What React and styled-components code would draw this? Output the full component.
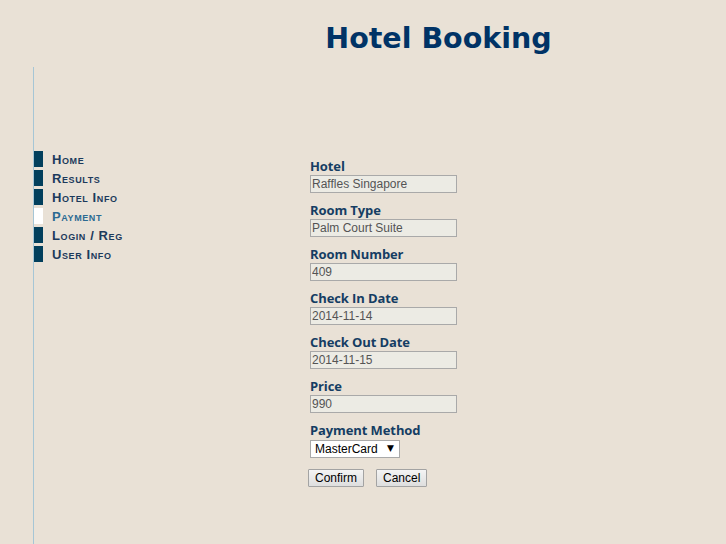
import React, { useState } from 'react';
import styled, { createGlobalStyle } from 'styled-components';

const GlobalStyle = createGlobalStyle`
  html, body {
    margin: 0;
    padding: 0;
    background: #e9e1d6;
    height: 100%;
  }
  #root { min-height: 100%; }
`;

const Page = styled.div`
  min-height: 544px;
  display: flex;
  flex-direction: column;
`;

const Header = styled.header`
  height: 67px;
  padding-left: 151px;
  display: flex;
  justify-content: center;
  align-items: flex-start;
`;

const Title = styled.h1`
  margin: 19px 0 0;
  font-family: "DejaVu Sans", Verdana, sans-serif;
  font-size: 28.5px;
  font-weight: bold;
  color: #003366;
  line-height: 40px;
`;

const Body = styled.div`
  flex: 1;
  display: flex;
`;

const Sidebar = styled.nav`
  margin-left: 33px;
  width: 117px;
  border-left: 1px solid #a6c6d6;
  padding-top: 84px;
  display: flex;
  flex-direction: column;
  gap: 3px;
`;

const NavItem = styled.a`
  display: flex;
  align-items: center;
  height: 16px;
  gap: 9px;
  font-family: "Liberation Sans", Arial, sans-serif;
  font-weight: bold;
  font-size: 13px;
  font-variant: small-caps;
  letter-spacing: 0.6px;
  color: ${p => (p.$active ? '#2b6a92' : '#1c3a5c')};
  text-decoration: none;
  cursor: pointer;
  white-space: nowrap;
`;

const Marker = styled.span`
  width: 9px;
  height: 16px;
  background: ${p => (p.$active ? '#ffffff' : '#023f5c')};
`;

const Main = styled.main`
  flex: 1;
  padding: 91px 0 0 159px;
`;

const Form = styled.form`
  display: flex;
  flex-direction: column;
`;

const Field = styled.div`
  display: flex;
  flex-direction: column;
  margin-bottom: 9px;
`;

const Label = styled.label`
  font-family: "Open Sans", "Lato", sans-serif;
  font-weight: 700;
  font-size: 13px;
  line-height: 17px;
  color: #153d63;
  letter-spacing: -0.1px;
`;

const Input = styled.input`
  box-sizing: border-box;
  width: 147px;
  height: 18px;
  margin: 0;
  padding: 0 0 0 1px;
  border: 1px solid #a9a9a9;
  background: #ecebe4;
  font-family: "Liberation Sans", Arial, sans-serif;
  font-size: 12px;
  color: #545454;
  outline: none;
`;

const SelectWrap = styled.div`
  position: relative;
  width: 90px;
  height: 18px;
`;

const Select = styled.select`
  appearance: none;
  -webkit-appearance: none;
  box-sizing: border-box;
  width: 100%;
  height: 100%;
  margin: 0;
  padding: 0 0 0 4px;
  border: 1px solid #a9a9a9;
  border-radius: 0;
  background: #ffffff;
  font-family: "Liberation Sans", Arial, sans-serif;
  font-size: 12px;
  color: #000;
  outline: none;
`;

const Arrow = styled.span`
  position: absolute;
  right: 6px;
  top: 2px;
  font-family: "DejaVu Sans", sans-serif;
  font-size: 9px;
  line-height: 14px;
  color: #000;
  pointer-events: none;
`;

const Buttons = styled.div`
  display: flex;
  gap: 12px;
  margin: 3px 0 0 -2px;
`;

const Button = styled.button`
  box-sizing: border-box;
  height: 18px;
  padding: 0 6px;
  border: 1px solid #a3a3a3;
  border-radius: 1px;
  background: linear-gradient(#f4f4f4, #dedede);
  font-family: "Liberation Sans", Arial, sans-serif;
  font-size: 12px;
  color: #000;
  cursor: pointer;
  line-height: 14px;
`;

const navLinks = ['Home', 'Results', 'Hotel Info', 'Payment', 'Login / Reg', 'User Info'];

const fields = [
  { label: 'Hotel', value: 'Raffles Singapore' },
  { label: 'Room Type', value: 'Palm Court Suite' },
  { label: 'Room Number', value: '409' },
  { label: 'Check In Date', value: '2014-11-14' },
  { label: 'Check Out Date', value: '2014-11-15' },
  { label: 'Price', value: '990' },
];

export default function App() {
  const [method, setMethod] = useState('MasterCard');

  return (
    <Page>
      <GlobalStyle />
      <Header>
        <Title>Hotel Booking</Title>
      </Header>
      <Body>
        <Sidebar>
          {navLinks.map(name => (
            <NavItem key={name} $active={name === 'Payment'}>
              <Marker $active={name === 'Payment'} />
              {name}
            </NavItem>
          ))}
        </Sidebar>
        <Main>
          <Form onSubmit={e => e.preventDefault()}>
            {fields.map(f => (
              <Field key={f.label}>
                <Label>{f.label}</Label>
                <Input value={f.value} readOnly />
              </Field>
            ))}
            <Field>
              <Label>Payment Method</Label>
              <SelectWrap>
                <Select value={method} onChange={e => setMethod(e.target.value)}>
                  <option>MasterCard</option>
                  <option>Visa</option>
                  <option>AmEx</option>
                </Select>
                <Arrow>▼</Arrow>
              </SelectWrap>
            </Field>
            <Buttons>
              <Button type="submit">Confirm</Button>
              <Button type="button">Cancel</Button>
            </Buttons>
          </Form>
        </Main>
      </Body>
    </Page>
  );
}
